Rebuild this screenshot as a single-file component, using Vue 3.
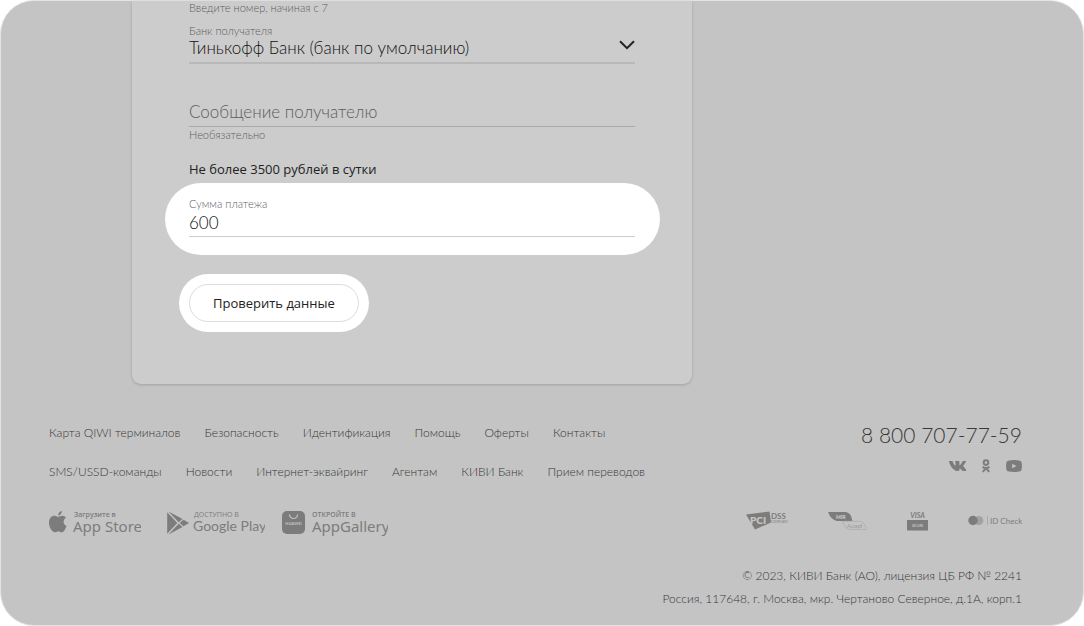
<script setup>
import { ref } from 'vue'

const bank = ref('tinkoff')
const message = ref('')
const amount = ref('600')

const navRows = [
  ['Карта QIWI терминалов', 'Безопасность', 'Идентификация', 'Помощь', 'Оферты', 'Контакты'],
  ['SMS/USSD-команды', 'Новости', 'Интернет-эквайринг', 'Агентам', 'КИВИ Банк', 'Прием переводов'],
]
</script>

<template>
  <div class="page">
    <main>
      <form class="card" @submit.prevent>
        <p class="hint">Введите номер, начиная с 7</p>

        <div class="field bank">
          <label for="bank">Банк получателя</label>
          <div class="select-wrap">
            <select id="bank" v-model="bank">
              <option value="tinkoff">Тинькофф Банк (банк по умолчанию)</option>
            </select>
            <svg class="chevron" width="16" height="10" viewBox="0 0 16 10" aria-hidden="true">
              <path d="M1 1.2 8 8.2 15 1.2" fill="none" stroke="#222" stroke-width="2" />
            </svg>
          </div>
        </div>

        <div class="field message">
          <input id="message" v-model="message" type="text" placeholder="Сообщение получателю" aria-label="Сообщение получателю" aria-describedby="message-hint" />
          <p id="message-hint" class="hint">Необязательно</p>
        </div>

        <p class="limit">Не более 3500 рублей в сутки</p>

        <div class="field spotlight">
          <label for="amount">Сумма платежа</label>
          <input id="amount" v-model="amount" type="text" inputmode="decimal" />
        </div>

        <div class="action">
          <button type="submit">Проверить данные</button>
        </div>
      </form>
    </main>

    <footer>
      <div class="row top">
        <nav>
          <ul v-for="(row, i) in navRows" :key="i">
            <li v-for="item in row" :key="item"><a href="#">{{ item }}</a></li>
          </ul>
        </nav>
        <div class="contact">
          <a class="phone" href="tel:88007077759">8 800 707-77-59</a>
          <div class="social">
            <a href="#" aria-label="ВКонтакте">
              <svg width="17" height="10" viewBox="0 0 17 10">
                <path d="M.4 0h2.7c.3 0 .5.2.6.5C4.400 2.600 5.500 4.600 6.200 4.600c.3 0 .4-.3.4-1V1.700C6.500.9 6 .8 6 .4 6 .2 6.200 0 6.500 0h3.300c.4 0 .6.2.6.600v3c0 .4.2.6.4.6.5 0 1.800-1.700 2.600-3.700.1-.3.300-.5.700-.5h2.300c.500 0 .7.300.5.800-.4 1.100-2.700 3.900-2.700 4.300 0 .5 2.500 2.600 3 4 .2.500-.1.900-.6.900h-2.700c-1 0-1.900-2.400-3-2.400-.4 0-.5.3-.5.800v.7c0 .7-.3.900-1.400.9C5 10 1.700 6.400 0 .7-.1.300.100 0 .4 0Z" />
              </svg>
            </a>
            <a href="#" aria-label="Одноклассники">
              <svg width="10" height="14" viewBox="0 0 10 14">
                <g fill="none" stroke="#7c7c7c" stroke-width="2">
                  <circle cx="5" cy="3.600" r="2.300" />
                  <path d="M1.500 7.800Q5 10 8.500 7.800M5 9.200 1.800 12.800M5 9.200l3.200 3.600" />
                </g>
              </svg>
            </a>
            <a href="#" aria-label="YouTube">
              <svg width="16" height="12" viewBox="0 0 16 12">
                <path fill-rule="evenodd" d="M3 .4Q8-.2 13 .4 15.500.5 15.700 3q.4 3 0 6-.2 2.500-2.700 2.600-5 .6-10 0Q.5 11.500.3 9-.1 6 .3 3 .5.500 3 .4ZM6.200 3.700v4.600L10.500 6Z" />
              </svg>
            </a>
          </div>
        </div>
      </div>

      <div class="row badges">
        <div class="stores">
          <a href="#" aria-label="Загрузите в App Store">
            <svg width="92" height="28" viewBox="0 0 92 28">
              <path d="M12.900 1c.1 2.100-1.600 4.500-3.700 4.500C9 3.300 10.800 1.100 12.900 1ZM9.300 7c.8 0 2-1.200 3.900-1.200 1.500 0 2.900.8 3.700 2-3.400 2.100-2.800 6.900.6 8.200-.8 2.700-2.700 6.300-4.700 6.300-1.300 0-1.800-.8-3.400-.8s-2.200.8-3.400.8C3.500 22.300 0 17.700 0 13c0-4.700 2.700-7.200 5.400-7.200C7.100 5.800 8.400 7 9.300 7Z" />
              <text class="t-head" x="25" y="7">Загрузите в</text>
              <text class="t-apple" x="24" y="22">App Store</text>
            </svg>
          </a>
          <a href="#" aria-label="Доступно в Google Play">
            <svg width="98" height="28" viewBox="0 0 98 28">
              <path d="M.2 2.200v21.600L10.300 13ZM1.500 1.500l14 7.600-3.800 3.100ZM1.500 24.500l14-7.600-3.800-3.100ZM16.500 9.700l5.500 3.300-5.500 3.300L12.600 13Z" />
              <text class="t-head light" x="27" y="7">ДОСТУПНО В</text>
              <text class="t-google" x="26" y="21">Google Play</text>
            </svg>
          </a>
          <a href="#" aria-label="Откройте в AppGallery">
            <svg width="106" height="28" viewBox="0 0 106 28">
              <rect y="1" width="23" height="23" rx="5" />
              <path d="M7.500 4.500a4 4 0 0 0 8 0" fill="none" stroke="#c4c4c4" stroke-width="1.200" />
              <text class="t-huawei" x="11.500" y="15" text-anchor="middle">HUAWEI</text>
              <text class="t-head" x="30" y="7">ОТКРОЙТЕ В</text>
              <text class="t-gallery" x="30" y="22">AppGallery</text>
            </svg>
          </a>
        </div>

        <div class="certs">
          <svg width="42" height="20" viewBox="0 0 42 20" role="img" aria-label="PCI DSS Compliant">
            <path d="M0 3.500 23.500.5 25 11.500 9 18.500Z" />
            <text class="t-pci" x="4" y="12.500">PCI</text>
            <text class="t-dss" x="25" y="8">DSS</text>
            <text class="t-tiny" x="25" y="12">COMPLIANT</text>
          </svg>
          <svg width="39" height="20" viewBox="0 0 39 20" role="img" aria-label="MIR Accept">
            <path d="M0 1h18q5.500 1 6.300 9H9Q3 9 0 1Z" />
            <path d="M14.500 10.300H32q5 1 6.200 8.200H22q-5.500-1-7.500-8.200Z" fill="none" stroke="#a9a9a9" stroke-width=".7" />
            <text class="t-mir" x="8" y="7.500">MIR</text>
            <text class="t-accept" x="19" y="16.500">Accept</text>
          </svg>
          <svg width="21" height="20" viewBox="0 0 21 20" role="img" aria-label="Verified by Visa">
            <text class="t-visa" x="10.500" y="7" text-anchor="middle">VISA</text>
            <rect y="9" width="21" height="10.500" />
            <text class="t-secure" x="10.500" y="15.500" text-anchor="middle">SECURE</text>
          </svg>
          <svg width="54" height="20" viewBox="0 0 54 20" role="img" aria-label="ID Check">
            <circle cx="10.800" cy="9.500" r="4.500" fill="#a2a2a2" />
            <circle cx="5" cy="9.500" r="4.700" />
            <path d="M19.500 5v9" stroke="#aaa" stroke-width="1" />
            <text class="t-check" x="22" y="12.500">ID Check</text>
          </svg>
        </div>
      </div>

      <address>
        <p>© 2023, КИВИ Банк (АО), лицензия ЦБ РФ № 2241</p>
        <p>Россия, 117648, г. Москва, мкр. Чертаново Северное, д.1А, корп.1</p>
      </address>
    </footer>
  </div>
</template>

<style>
body {
  background: #fff;
}
</style>

<style scoped>
* {
  box-sizing: border-box;
  margin: 0;
}

.page {
  min-height: 100vh;
  padding: 0 61px 14px 48px;
  border: 1px solid #e4e4e4;
  border-radius: 34px;
  background: #c4c4c4;
  color: #383838;
  font-family: Lato, "Open Sans", sans-serif;
  font-size: 12px;
  font-weight: 300;
}

main {
  padding: 0 0 0 83px;
}

.card {
  max-width: 560px;
  padding: 0 57px 52px;
  border-radius: 0 0 9px 9px;
  background: #ccc;
  box-shadow: 0 1px 3px rgba(0, 0, 0, 0.18);
}

.hint,
.field label {
  display: block;
  color: #5c5c5c;
  font-size: 11px;
  line-height: 16px;
}

.card > .hint {
  line-height: 14px;
}

.bank {
  margin-top: 8px;
}

.select-wrap {
  position: relative;
}

.field select,
.field input {
  display: block;
  width: 100%;
  height: 24px;
  padding: 0 0 6px;
  border: 0;
  border-bottom: 1px solid #aaa;
  border-radius: 0;
  outline: 0;
  background: transparent;
  color: #111;
  font: 300 17px/20px Lato, "Open Sans", sans-serif;
  appearance: none;
}

.field select {
  height: 25px;
  border-bottom: 2px solid #b8b8b8;
  padding: 0 0 5px;
  line-height: 18px;
}

.chevron {
  position: absolute;
  top: 1px;
  right: 0;
}

.message {
  margin-top: 39px;
}

.field input::placeholder {
  color: #5c5c5c;
  opacity: 1;
}

.limit {
  margin-top: 16px;
  color: #222;
  font: 500 13px/20px "Open Sans", "Noto Sans", sans-serif;
}

.spotlight {
  margin: 4px -25px 0 -24px;
  padding: 13px 25px 18px 24px;
  border-radius: 36px;
  background: #fff;
}

.field.spotlight input {
  height: 25px;
  padding: 0 0 3px;
  border-color: #ccc;
}

.action {
  width: fit-content;
  margin: 19px 0 0 -10px;
  padding: 10px;
  border-radius: 29px;
  background: #fff;
}

.action button {
  display: block;
  height: 38px;
  padding: 0 23px;
  border: 1px solid #ddd;
  border-radius: 19px;
  background: #fff;
  color: #222;
  font: 500 13px/20px "Open Sans", "Noto Sans", sans-serif;
}

footer {
  padding-top: 29px;
}

a {
  color: inherit;
  text-decoration: none;
}

.row {
  display: flex;
  justify-content: space-between;
}

nav ul {
  display: flex;
  gap: 24px;
  height: 39px;
  padding: 0;
  list-style: none;
  line-height: 39px;
}

.contact {
  display: flex;
  flex-direction: column;
  align-items: flex-end;
  padding-top: 7px;
}

.phone {
  font-size: 21px;
  line-height: 30px;
}

.social {
  display: flex;
  align-items: center;
  gap: 15px;
  height: 32px;
}

svg {
  display: block;
  fill: #7c7c7c;
}

svg text {
  font-weight: 400;
}

.badges {
  margin-top: 19px;
}

.stores {
  display: flex;
  gap: 17px;
}

.stores a:first-child {
  margin-right: 9px;
}

.certs {
  display: flex;
  gap: 40px;
  padding-top: 1px;
}

svg .t-head { font: 600 7px "Open Sans", sans-serif; }
svg .t-head.light { font-weight: 400; }
svg .t-apple { font: 400 15px "Noto Sans", sans-serif; }
svg .t-google { font: 400 14px Lato, sans-serif; }
svg .t-huawei { fill: #c4c4c4; font-size: 4px; font-weight: 700; }
svg .t-gallery { font: 400 15px "Noto Sans", sans-serif; }
svg .t-pci { fill: #c4c4c4; font-size: 10px; font-weight: 800; }
svg .t-dss { font-size: 8px; font-weight: 700; }
svg .t-tiny { font-size: 3px; }
svg .t-mir { fill: #c4c4c4; font-size: 5px; font-weight: 800; }
svg .t-accept { fill: #999; font-size: 5px; }
svg .t-visa { font-size: 7px; font-weight: 700; font-style: italic; }
svg .t-secure { fill: #c4c4c4; font-size: 3px; font-weight: 700; }
svg .t-check { font-size: 8px; }

address {
  margin-top: 26px;
  font-style: normal;
  line-height: 23px;
  text-align: right;
}
</style>
